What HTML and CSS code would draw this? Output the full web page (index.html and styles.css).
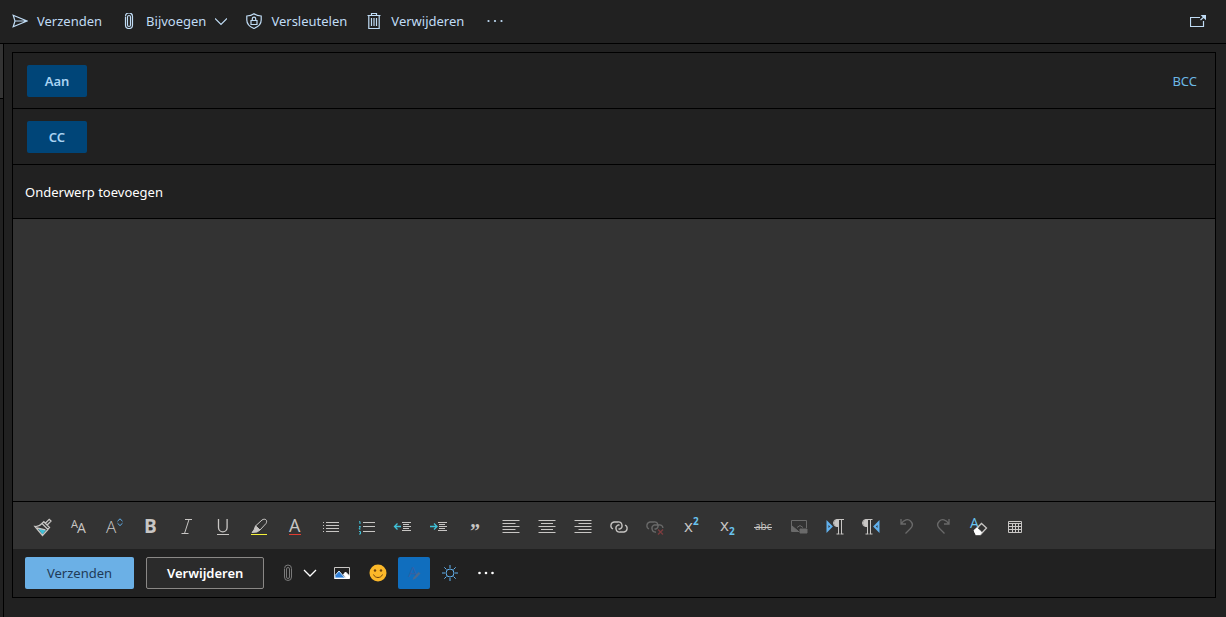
FILE: index.html
```html
<!DOCTYPE html>
<html lang="nl">
<head>
    <meta charset="UTF-8">
    <meta name="viewport" content="width=device-width, initial-scale=1.0">
    <title>Nieuw bericht</title>
    <link rel="stylesheet" href="styles.css">
</head>
<body>
    <header class="command-bar">
        <button type="button" class="command">
            <svg class="icon" viewBox="0 0 16 16"><path d="M1.2 2.2L15 8 1.2 13.8 3 8zM3 8h11"/></svg>
            <span>Verzenden</span>
        </button>
        <button type="button" class="command">
            <svg class="icon" viewBox="0 0 16 16"><path d="M4.500 4v8a3.500 3.500 0 0 0 7 0V3.500a3.500 3.500 0 0 0-7 0M6.500 4v8a1.500 1.500 0 0 0 3 0V4a1.500 1.500 0 0 0-3 0"/></svg>
            <span>Bijvoegen</span>
            <svg class="icon chevron" viewBox="2 0 12 16"><path d="M2 5.500l6 6 6-6"/></svg>
        </button>
        <button type="button" class="command">
            <svg class="icon" viewBox="0 0 16 16"><path d="M8 .7c2 1.500 4.300 2.200 7.200 2.300v4c0 4.200-2.800 6.800-7.200 8.500C3.600 13.800.8 11.200.8 7V3C3.700 2.900 6 2.200 8 .7z"/><path d="M5 7.500h6v4H5zM6.300 7.500V5.800a1.700 1.700 0 0 1 3.400 0v1.700"/></svg>
            <span>Versleutelen</span>
        </button>
        <button type="button" class="command">
            <svg class="icon" viewBox="0 0 16 16"><path d="M1.500 2.500h13M5.500 2.500v-2h5v2M2.800 2.500v13h10.400v-13M5.500 5v8M8 5v8M10.500 5v8"/></svg>
            <span>Verwijderen</span>
        </button>
        <button type="button" class="command more" aria-label="Meer opties">
            <svg class="icon solid" viewBox="0 0 16 16"><circle cx="1.500" cy="8" r="1.100"/><circle cx="8" cy="8" r="1.100"/><circle cx="14.500" cy="8" r="1.100"/></svg>
        </button>
        <button type="button" class="command pop-out" aria-label="Openen in nieuw venster">
            <svg class="icon" viewBox="0 0 16 16"><path d="M10 4.500H.5v9h13V8M10.500 7l4-3.500"/><path class="fill" d="M12 2.500h3.500V6z"/></svg>
        </button>
    </header>

    <main class="workspace">
        <div class="list-edge"><div class="list-item"></div></div>

        <form class="compose">
            <div class="field-row">
                <button type="button" class="recipient">Aan</button>
                <input type="text" class="field" aria-label="Aan">
                <a href="#" class="bcc">BCC</a>
            </div>
            <div class="field-row">
                <button type="button" class="recipient">CC</button>
                <input type="text" class="field" aria-label="CC">
            </div>
            <div class="field-row subject-row">
                <input type="text" class="field" aria-label="Onderwerp" placeholder="Onderwerp toevoegen">
            </div>
            <textarea class="message" aria-label="Bericht"></textarea>

            <div class="format-bar">
                <button type="button" class="tool" aria-label="Opmaak kopiëren">
                    <svg class="icon" viewBox="0 0 18 18"><path class="cyan" d="M4 10.500l8 1.500-3.500 4.500z"/><path class="thick" d="M1 8.500c3 .3 5-.7 7-3l6 6-5.500 6zM8 5.500l1.800-1.800 5.700 5.800-1.800 1.700M11.300 5.200L15.200 1.300l1.800 1.800-3.900 3.900M3 10l8.500 1.800"/></svg>
                </button>
                <button type="button" class="tool" aria-label="Lettertype">
                    <svg class="icon glyph" viewBox="0 0 18 18"><text x="1" y="10" font-size="11">A</text><text x="7" y="15" font-size="14">A</text></svg>
                </button>
                <button type="button" class="tool" aria-label="Tekengrootte">
                    <svg class="icon glyph thin" viewBox="0 0 18 18"><text x="0" y="15" font-size="17">A</text><path class="blue-line" d="M11.500 3.200L14 .8l2.500 2.400M11.500 5.200L14 7.600l2.500-2.400"/></svg>
                </button>
                <button type="button" class="tool" aria-label="Vet">
                    <svg class="icon glyph bold" viewBox="0 0 18 18"><text x="2" y="15" font-size="19">B</text></svg>
                </button>
                <button type="button" class="tool" aria-label="Cursief">
                    <svg class="icon" viewBox="0 0 18 18"><path d="M7 1.500h7M3.500 15.500h7M11 1.500l-4.500 14"/></svg>
                </button>
                <button type="button" class="tool" aria-label="Onderstrepen">
                    <svg class="icon" viewBox="0 0 18 18"><path class="thick" d="M4.500 1v8.500a4.300 4.300 0 0 0 8.600 0V1"/><path d="M3 16.500h12"/></svg>
                </button>
                <button type="button" class="tool" aria-label="Markeren">
                    <svg class="icon" viewBox="0 0 18 18"><path d="M5.500 8l6.500-6c3-2 6 0 4 3.500L10 12z"/><path class="fill" d="M5.500 8L4 12l-2 2.500 5-.5 3-2z"/><path class="yellow-line" d="M1 16.500h16"/></svg>
                </button>
                <button type="button" class="tool" aria-label="Tekstkleur">
                    <svg class="icon glyph" viewBox="0 0 18 18"><text x="3" y="14" font-size="18">A</text><path class="red-line" d="M3 16.500h12"/></svg>
                </button>
                <button type="button" class="tool" aria-label="Opsommingstekens">
                    <svg class="icon" viewBox="0 0 18 18"><path d="M4 4.500h13M4 7.500h13M4 10.500h13M4 13.500h13M1 4.500h1M1 7.500h1M1 10.500h1M1 13.500h1"/></svg>
                </button>
                <button type="button" class="tool" aria-label="Nummering">
                    <svg class="icon" viewBox="0 0 18 18"><path d="M5 4.500h12M5 8.500h12M5 13.500h12"/><path class="cyan-line" d="M1 4l1-.5V6M1 8.500h1.500L1 11h1.500M1 13.500h1.500V16H1"/></svg>
                </button>
                <button type="button" class="tool" aria-label="Inspringing verkleinen">
                    <svg class="icon" viewBox="0 0 18 18"><path d="M8 4.500h9M9 6.500h6M9 8.500h8M9 10.500h6M8 12.500h9"/><path class="cyan-line thick" d="M7 8.500H.8M3.500 5.500L.5 8.500l3 3"/></svg>
                </button>
                <button type="button" class="tool" aria-label="Inspringing vergroten">
                    <svg class="icon" viewBox="0 0 18 18"><path d="M8 4.500h9M9 6.500h6M9 8.500h8M9 10.500h6M8 12.500h9"/><path class="cyan-line thick" d="M0 8.500h6.500M4 5.500l3 3-3 3"/></svg>
                </button>
                <button type="button" class="tool" aria-label="Citaat">
                    <svg class="icon glyph quote" viewBox="0 0 18 18"><text x="4" y="20" font-size="20">”</text></svg>
                </button>
                <button type="button" class="tool" aria-label="Links uitlijnen">
                    <svg class="icon" viewBox="0 0 18 18"><path d="M.5 2.500h17M.5 5.500h13M.5 8.500h17M.5 11.500h13M.5 14.500h17"/></svg>
                </button>
                <button type="button" class="tool" aria-label="Centreren">
                    <svg class="icon" viewBox="0 0 18 18"><path d="M.5 2.500h17M3 5.500h12M.5 8.500h17M3 11.500h12M.5 14.500h17"/></svg>
                </button>
                <button type="button" class="tool" aria-label="Rechts uitlijnen">
                    <svg class="icon" viewBox="0 0 18 18"><path d="M.5 2.500h17M4.500 5.500h13M.5 8.500h17M4.500 11.500h13M.5 14.500h17"/></svg>
                </button>
                <button type="button" class="tool" aria-label="Koppeling invoegen">
                    <svg class="icon" viewBox="0 0 18 18"><path class="thick" d="M3 11A3.700 3.700 0 0 1 4 4h4a3.700 3.700 0 0 1 2 7H8.500M15 7a3.700 3.700 0 0 1-1 7h-4a3.700 3.700 0 0 1-2-7h1.500"/></svg>
                </button>
                <button type="button" class="tool" aria-label="Koppeling verwijderen" disabled>
                    <svg class="icon" viewBox="0 0 18 18"><path class="thick" d="M3 11A3.700 3.700 0 0 1 4 4h4a3.700 3.700 0 0 1 2 7H8.500M10 14a3.700 3.700 0 0 1-2-7h5a3.700 3.700 0 0 1 4 3"/><path class="red-line thick" d="M12 11.500l5 5M17 11.500l-5 5"/></svg>
                </button>
                <button type="button" class="tool" aria-label="Superscript">
                    <svg class="icon glyph" viewBox="0 0 18 18"><text x="2" y="14" font-size="17">x</text><text class="accent" x="11" y="7" font-size="10">2</text></svg>
                </button>
                <button type="button" class="tool" aria-label="Subscript">
                    <svg class="icon glyph" viewBox="0 0 18 18"><text x="2" y="13" font-size="17">x</text><text class="accent" x="11" y="17" font-size="10">2</text></svg>
                </button>
                <button type="button" class="tool" aria-label="Doorhalen">
                    <svg class="icon glyph" viewBox="0 0 18 18"><text x="1" y="12" font-size="10">abc</text><path d="M0 9.500h18"/></svg>
                </button>
                <button type="button" class="tool" aria-label="Alternatieve tekst" disabled>
                    <svg class="icon" viewBox="0 0 18 18"><path d="M9 13.500H1.500v-11h15V10"/><path class="fill" d="M2 13V8l6 5zM10 11h7v4h-7z"/><path d="M7 9.500l3-2 3 2"/></svg>
                </button>
                <button type="button" class="tool" aria-label="Van links naar rechts">
                    <svg class="icon" viewBox="0 0 18 18"><path class="blue-line heavy" d="M1.500 4.500v8l4-4z"/><path class="fill" d="M12 1.500a3.500 3.500 0 0 0 0 7z"/><path d="M18 1.500h-7a3.500 3.500 0 0 0 0 7h1M12.500 2v14M15.500 2v14M10.500 16h3M14.500 16h3"/></svg>
                </button>
                <button type="button" class="tool" aria-label="Van rechts naar links">
                    <svg class="icon" viewBox="0 0 18 18"><path class="blue-line heavy" d="M16.500 4.500v8l-4-4z"/><path class="fill" d="M5 1.500a3.500 3.500 0 0 0 0 7z"/><path d="M10.500 1.500H4a3.500 3.500 0 0 0 0 7h1M5.500 2v14M8.500 2v14M3.500 16h3M7.500 16h3"/></svg>
                </button>
                <button type="button" class="tool" aria-label="Ongedaan maken" disabled>
                    <svg class="icon" viewBox="0 0 18 18"><path class="thick" d="M3 1v5h5M3 6C6 1.500 10 .5 12.500 3s2.500 5 0 7.500L7.500 15.500"/></svg>
                </button>
                <button type="button" class="tool" aria-label="Opnieuw" disabled>
                    <svg class="icon" viewBox="0 0 18 18"><path class="thick" d="M15 1v5h-5M15 6C12 1.500 8 .5 5.500 3s-2.500 5 0 7.500l5 5"/></svg>
                </button>
                <button type="button" class="tool" aria-label="Opmaak wissen">
                    <svg class="icon glyph" viewBox="0 0 18 18"><text class="accent light-accent" x="0" y="10" font-size="14">A</text><path class="thick" d="M4.500 12.500l7-7 5 4.500-6 6.500H6z"/><path class="white-fill" d="M4 12.500l3-2.500 4.500 4-1.500 2.500H6z"/></svg>
                </button>
                <button type="button" class="tool" aria-label="Tabel invoegen">
                    <svg class="icon" viewBox="0 0 18 18"><path d="M2.500 3.500h13v11h-13zM2.500 5.500h13M2.500 8.500h13M2.500 11.500h13M6.500 5.500v9M9.500 5.500v9M12.500 5.500v9"/></svg>
                </button>
            </div>

            <div class="send-bar">
                <button type="submit" class="btn primary">Verzenden</button>
                <button type="button" class="btn secondary">Verwijderen</button>
                <div class="send-tools">
                    <button type="button" class="tool attach" aria-label="Bijvoegen">
                        <svg class="icon dim" viewBox="0 0 18 18"><path d="M5.500 5v8a3.500 3.500 0 0 0 7 0V4.500a3.500 3.500 0 0 0-7 0M7.500 5v8a1.500 1.500 0 0 0 3 0V5a1.500 1.500 0 0 0-3 0"/></svg>
                        <svg class="icon light" viewBox="0 0 18 18"><path class="thick" d="M3 6l6 6 6-6"/></svg>
                    </button>
                    <button type="button" class="tool" aria-label="Afbeelding invoegen">
                        <svg class="icon" viewBox="0 0 18 18"><path d="M1.500 3.500h15v11h-15z"/><path class="sky" d="M2 11.500l4-4.500 6 7H2z"/><path class="white-fill" d="M10.500 10.500l2-2.500 4 4v2H13z"/><path class="white-line" d="M1.500 14.500h15"/></svg>
                    </button>
                    <button type="button" class="tool" aria-label="Emoji">
                        <svg class="icon" viewBox="0 0 18 18"><circle class="face" cx="9" cy="9" r="8.500"/><circle class="eye" cx="6" cy="6.500" r="1.200"/><circle class="eye" cx="12" cy="6.500" r="1.200"/><path class="smile" d="M4.500 10.500c1.500 4 7.500 4 9 0"/></svg>
                    </button>
                    <button type="button" class="tool active" aria-label="Opmaakopties" aria-pressed="true">
                        <svg class="icon glyph" viewBox="0 0 18 18"><text x="3" y="13" font-size="15">A</text><path class="pen" d="M13.500 8l2 1.500-5 5-3 1.500 1-2.500z"/></svg>
                    </button>
                    <button type="button" class="tool" aria-label="Lichte modus">
                        <svg class="icon" viewBox="0 0 18 18"><path class="blue-line" d="M9 1v3M9 14v3M1 9h3M14 9h3M3.300 3.300l2.200 2.200M12.500 12.500l2.200 2.200M3.300 14.700l2.200-2.200M12.500 5.500l2.200-2.200M13 9a4 4 0 1 1-8 0 4 4 0 0 1 8 0z"/></svg>
                    </button>
                    <button type="button" class="tool" aria-label="Meer">
                        <svg class="icon light solid" viewBox="0 0 18 18"><circle cx="2.500" cy="9" r="1.300"/><circle cx="9" cy="9" r="1.300"/><circle cx="15.500" cy="9" r="1.300"/></svg>
                    </button>
                </div>
            </div>
        </form>
    </main>
</body>
</html>
```
FILE: styles.css
```css
* {
    box-sizing: border-box;
}

body {
    margin: 0;
    min-height: 100vh;
    display: flex;
    flex-direction: column;
    background-color: #212121;
    color: #fff;
    font-family: "Noto Sans", "Open Sans", sans-serif;
    font-size: 13px;
    line-height: 20px;
}

button, input, textarea {
    font: inherit;
    color: inherit;
    background: none;
    border: none;
    border-radius: 0;
    padding: 0;
    margin: 0;
}

button {
    cursor: pointer;
}

.icon {
    display: block;
    flex: none;
    width: 16px;
    height: 16px;
    fill: none;
    stroke: currentColor;
    stroke-width: 1;
}

.solid {
    fill: currentColor;
    stroke: none;
}

/* Top command bar */
.command-bar {
    display: flex;
    align-items: center;
    gap: 19px;
    height: 44px;
    padding: 0 20px 2px 12px;
    border-bottom: 1px solid #000;
    color: #c0dcf5;
}

.command {
    display: flex;
    align-items: center;
    gap: 9px;
}

.command .icon {
    stroke-width: 1.2;
}

.command .chevron {
    width: 12px;
}

.more {
    margin-left: 4px;
}

.pop-out {
    margin-left: auto;
}

/* Compose pane */
.workspace {
    flex: 1;
    display: flex;
}

.list-edge {
    width: 4px;
    border-right: 1px solid #000;
}

.list-item {
    height: 55px;
    background-color: #333;
    border-bottom: 1px solid #000;
}

.compose {
    flex: 1;
    display: flex;
    flex-direction: column;
    margin: 8px 10px 19px 8px;
    border: 1px solid #000;
}

.field-row {
    display: flex;
    align-items: center;
    height: 56px;
    padding: 0 18px 0 14px;
    border-bottom: 1px solid #000;
}

.subject-row {
    height: 54px;
    padding-left: 12px;
}

.recipient {
    width: 60px;
    height: 32px;
    background-color: #004578;
    border-radius: 2px;
    color: #a9d3f2;
    font-weight: 600;
}

.field {
    flex: 1;
    min-width: 0;
    height: 32px;
    outline: none;
}

.field::placeholder {
    color: #fff;
    opacity: 1;
}

.bcc {
    color: #6cb8e6;
    text-decoration: none;
}

.message {
    flex: 1;
    min-height: 120px;
    padding: 12px;
    background-color: #333;
    outline: none;
    resize: none;
}

/* Formatting toolbar */
.format-bar {
    display: flex;
    flex-wrap: wrap;
    align-items: center;
    gap: 4px;
    min-height: 48px;
    padding: 2px 14px 0;
    background-color: #333;
    border-top: 1px solid #000;
}

.tool {
    display: flex;
    align-items: center;
    justify-content: center;
    width: 32px;
    height: 32px;
    border-radius: 2px;
    color: #c8c6c4;
}

.tool .icon {
    width: 18px;
    height: 18px;
    overflow: visible;
}

.tool:disabled {
    color: #6a6a6a;
    cursor: default;
}

.tool:disabled .red-line {
    stroke: #7c3c3f;
}

.glyph text {
    fill: currentColor;
    stroke: none;
    font-family: "Open Sans", "Noto Sans", sans-serif;
    font-weight: 400;
}

.thin text {
    font-weight: 300;
}

.bold text {
    font-weight: 700;
}

.quote text {
    font-family: "Liberation Serif", serif;
    font-weight: 700;
}

.glyph .accent {
    fill: #69c4f0;
    font-weight: 700;
}

.glyph .light-accent {
    font-weight: 400;
}

.fill {
    fill: currentColor;
}

.white-fill {
    fill: #fff;
    stroke: #fff;
}

.white-line {
    stroke: #fff;
}

.cyan {
    fill: #3fc1d8;
    stroke: none;
}

.sky {
    fill: #2f7fd8;
    stroke: #cfe6fa;
}

.thick {
    stroke-width: 1.3;
}

.heavy {
    stroke-width: 2;
}

.cyan-line {
    stroke: #3fc1d8;
}

.blue-line {
    stroke: #62b1ee;
}

.yellow-line {
    stroke: #f4f13a;
}

.red-line {
    stroke: #e03c31;
}

/* Bottom bar */
.send-bar {
    display: flex;
    align-items: center;
    gap: 12px;
    height: 48px;
    padding: 0 12px;
}

.btn {
    min-width: 109px;
    height: 32px;
    padding: 0 20px;
    border: 1px solid transparent;
    border-radius: 2px;
}

.primary {
    background-color: #6bb0e6;
    color: #1f3b57;
}

.secondary {
    background-color: #2b2b2b;
    border-color: #8a8886;
    font-weight: 600;
}

.send-tools {
    display: flex;
    gap: 4px;
}

.attach {
    width: 46px;
    gap: 4px;
}

.dim {
    color: #7a7a7a;
}

.light {
    color: #fff;
}

.active {
    background-color: #106ebe;
    color: #2f62a8;
}

.pen {
    fill: #4a6a90;
    stroke: none;
}

.face {
    fill: #fbb829;
    stroke: none;
}

.eye {
    fill: #6d4310;
    stroke: none;
}

.smile {
    stroke: #6d4310;
}
```
